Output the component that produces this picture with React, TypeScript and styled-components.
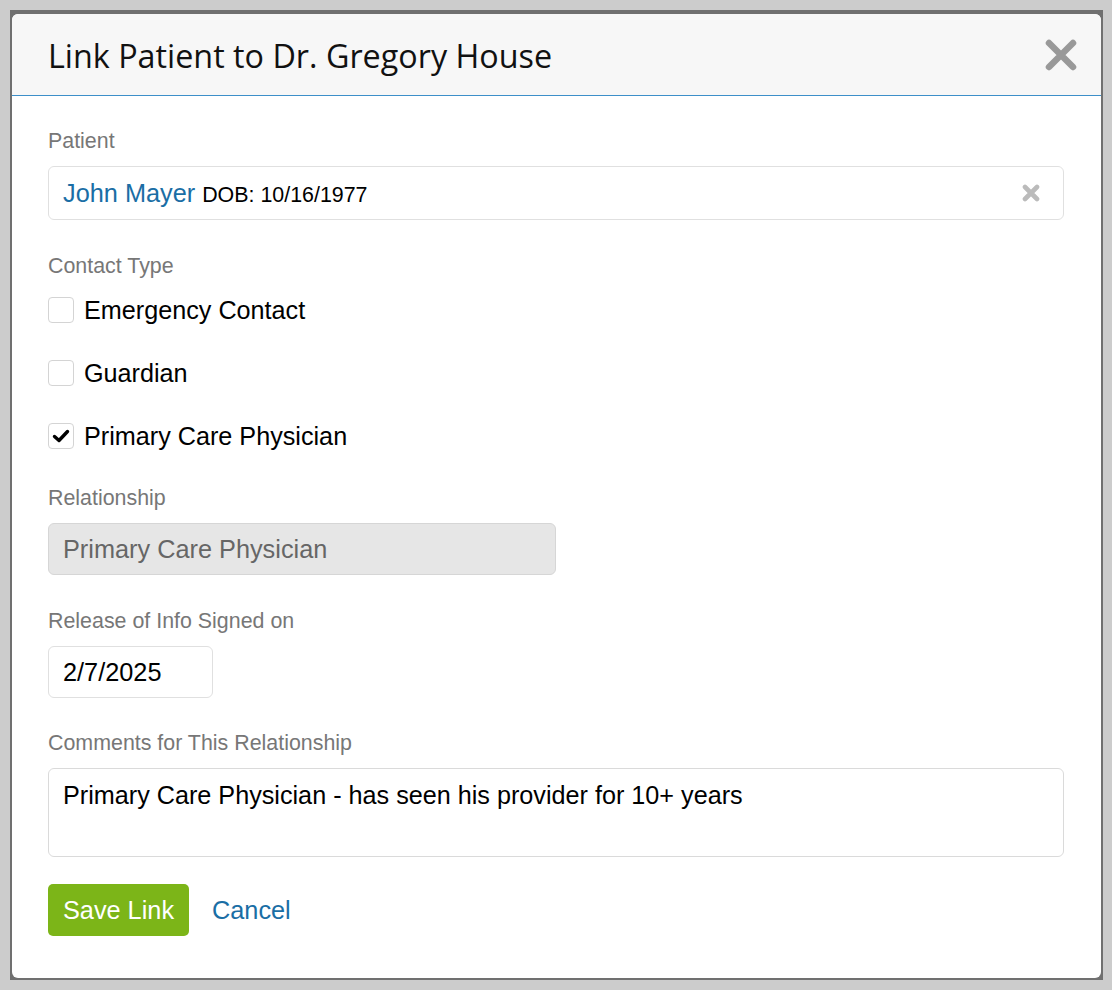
import React from 'react';
import styled, { createGlobalStyle } from 'styled-components';

const GlobalStyle = createGlobalStyle`
  html, body {
    margin: 0;
    padding: 0;
    background: #cccccc;
  }
  body {
    font-family: "Liberation Sans", Arial, sans-serif;
  }
`;

const Page = styled.div`
  padding: 10px 0 0 10px;
`;

const Frame = styled.div`
  width: 1093px;
  height: 970px;
  box-sizing: border-box;
  background: #707070;
  padding: 4px 2px 2px 2px;
`;

const Panel = styled.div`
  height: 100%;
  background: #ffffff;
  border-radius: 6px;
  overflow: hidden;
  display: flex;
  flex-direction: column;
`;

const Header = styled.div`
  height: 81px;
  background: #f7f7f7;
  border-bottom: 1px solid #3d8fc9;
  display: flex;
  align-items: center;
  justify-content: space-between;
  padding: 0 23px 0 36px;
`;

const Title = styled.h1`
  margin: 0;
  font-family: "Open Sans", "Liberation Sans", sans-serif;
  font-weight: 400;
  font-size: 32.3px;
  color: #111;
`;

const CloseButton = styled.button`
  border: 0;
  background: none;
  padding: 0;
  width: 34px;
  height: 34px;
  display: flex;
  align-items: center;
  justify-content: center;
  cursor: pointer;
`;

const Body = styled.div`
  padding: 33px 37px 0 36px;
  display: flex;
  flex-direction: column;
`;

const Field = styled.div<{ $after?: number }>`
  margin-bottom: ${(p) => p.$after ?? 33}px;
`;

const Label = styled.div`
  font-size: 21.4px;
  line-height: 24px;
  color: #777777;
  margin-bottom: 13px;
`;

const Box = styled.div<{ $width?: number; $height: number; $disabled?: boolean }>`
  box-sizing: border-box;
  width: ${(p) => (p.$width ? `${p.$width}px` : '100%')};
  height: ${(p) => p.$height}px;
  border: 1px solid ${(p) => (p.$disabled ? '#d6d6d6' : '#e0e0e0')};
  border-radius: 6px;
  background: ${(p) => (p.$disabled ? '#e6e6e6' : '#ffffff')};
  color: ${(p) => (p.$disabled ? '#666666' : '#000000')};
  font-size: 25.3px;
  padding: 0 23px 0 14px;
  display: flex;
  align-items: center;
  justify-content: space-between;
`;

const TextArea = styled.div`
  box-sizing: border-box;
  height: 89px;
  border: 1px solid #dadada;
  border-radius: 6px;
  font-size: 25.2px;
  line-height: 30px;
  padding: 11px 14px;
  color: #000;
`;

const PatientName = styled.span`
  color: #1a6ea5;
  font-size: 25.3px;
`;

const Dob = styled.span`
  font-size: 21.4px;
  margin-left: 7px;
`;

const CheckList = styled.div`
  padding-top: 6px;
  display: flex;
  flex-direction: column;
  gap: 37px;
`;

const CheckRow = styled.label`
  display: flex;
  align-items: center;
  height: 26px;
  font-size: 25.2px;
  color: #000;
  cursor: pointer;
`;

const CheckBox = styled.span`
  box-sizing: border-box;
  width: 26px;
  height: 26px;
  border: 1px solid #d4d4d4;
  border-radius: 4px;
  background: #fff;
  margin-right: 10px;
  display: flex;
  align-items: center;
  justify-content: center;
`;

const Actions = styled.div`
  margin-top: -6px;
  display: flex;
  align-items: center;
  gap: 23px;
`;

const SaveButton = styled.button`
  width: 141px;
  height: 52px;
  border: 0;
  border-radius: 5px;
  background: #7cb518;
  color: #ffffff;
  font-family: "Liberation Sans", Arial, sans-serif;
  font-size: 25.3px;
  padding: 0;
  cursor: pointer;
`;

const CancelLink = styled.a`
  color: #1a6ea5;
  font-size: 25.3px;
  text-decoration: none;
  cursor: pointer;
`;

const CloseIcon = () => (
  <svg width="34" height="34" viewBox="0 0 34 34">
    <path d="M5 5 L29 29 M29 5 L5 29" stroke="#999999" strokeWidth="6.5" strokeLinecap="round" />
  </svg>
);

const ClearIcon = () => (
  <svg width="18" height="18" viewBox="0 0 18 18">
    <path d="M3 3 L15 15 M15 3 L3 15" stroke="#bbbbbb" strokeWidth="4.6" strokeLinecap="round" />
  </svg>
);

const CheckIcon = () => (
  <svg width="18" height="18" viewBox="0 0 18 18">
    <path d="M2.5 9.5 L7 13.5 L15.5 4.5" fill="none" stroke="#000" strokeWidth="3.4" strokeLinejoin="round" strokeLinecap="round" />
  </svg>
);

const contactTypes = [
  { label: 'Emergency Contact', checked: false },
  { label: 'Guardian', checked: false },
  { label: 'Primary Care Physician', checked: true },
];

export default function App() {
  return (
    <>
      <GlobalStyle />
      <Page>
        <Frame>
          <Panel>
            <Header>
              <Title>Link Patient to Dr. Gregory House</Title>
              <CloseButton aria-label="Close">
                <CloseIcon />
              </CloseButton>
            </Header>
            <Body>
              <Field $after={34}>
                <Label>Patient</Label>
                <Box $height={54}>
                  <span>
                    <PatientName>John Mayer</PatientName>
                    <Dob>DOB: 10/16/1977</Dob>
                  </span>
                  <ClearIcon />
                </Box>
              </Field>

              <Field $after={37}>
                <Label>Contact Type</Label>
                <CheckList>
                  {contactTypes.map((c) => (
                    <CheckRow key={c.label}>
                      <CheckBox>{c.checked && <CheckIcon />}</CheckBox>
                      {c.label}
                    </CheckRow>
                  ))}
                </CheckList>
              </Field>

              <Field $after={34}>
                <Label>Relationship</Label>
                <Box $height={52} $width={508} $disabled>
                  Primary Care Physician
                </Box>
              </Field>

              <Field $after={33}>
                <Label>Release of Info Signed on</Label>
                <Box $height={52} $width={165}>
                  2/7/2025
                </Box>
              </Field>

              <Field>
                <Label>Comments for This Relationship</Label>
                <TextArea>Primary Care Physician - has seen his provider for 10+ years</TextArea>
              </Field>

              <Actions>
                <SaveButton>Save Link</SaveButton>
                <CancelLink>Cancel</CancelLink>
              </Actions>
            </Body>
          </Panel>
        </Frame>
      </Page>
    </>
  );
}
